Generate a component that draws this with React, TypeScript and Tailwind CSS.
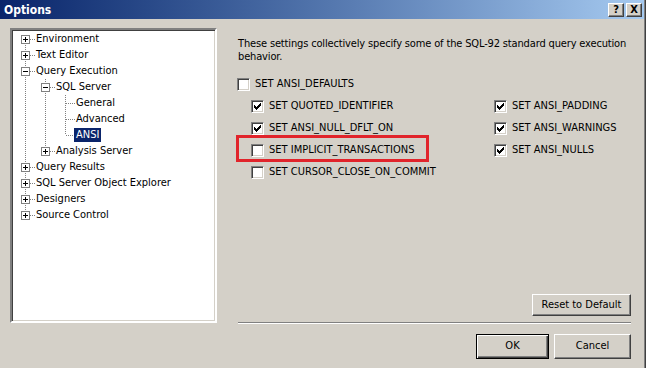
import React from "react";

type TreeRow = {
  level: number;
  label: string;
  kind: "plus" | "minus" | "leaf";
  guides: boolean[];
  first?: boolean;
  last?: boolean;
  selected?: boolean;
};

const rows: TreeRow[] = [
  { level: 0, label: "Environment", kind: "plus", guides: [], first: true },
  { level: 0, label: "Text Editor", kind: "plus", guides: [] },
  { level: 0, label: "Query Execution", kind: "minus", guides: [] },
  { level: 1, label: "SQL Server", kind: "minus", guides: [true] },
  { level: 2, label: "General", kind: "leaf", guides: [true, true] },
  { level: 2, label: "Advanced", kind: "leaf", guides: [true, true] },
  { level: 2, label: "ANSI", kind: "leaf", guides: [true, true], last: true, selected: true },
  { level: 1, label: "Analysis Server", kind: "plus", guides: [true], last: true },
  { level: 0, label: "Query Results", kind: "plus", guides: [] },
  { level: 0, label: "SQL Server Object Explorer", kind: "plus", guides: [] },
  { level: 0, label: "Designers", kind: "plus", guides: [] },
  { level: 0, label: "Source Control", kind: "plus", guides: [], last: true },
];

const dots = { stroke: "#808080", strokeWidth: 1, strokeDasharray: "1 1" };

const Guide = ({ on }: { on: boolean }) => (
  <svg width="20" height="16" className="shrink-0" shapeRendering="crispEdges">
    {on && <line x1="10.5" y1="0" x2="10.5" y2="16" {...dots} />}
  </svg>
);

const Connector = ({ row }: { row: TreeRow }) => (
  <svg width="20" height="16" className="shrink-0" shapeRendering="crispEdges">
    <line x1="10.5" y1={row.first ? 8 : 0} x2="10.5" y2={row.last ? 8 : 16} {...dots} />
    <line x1={row.kind === "leaf" ? 11 : 15} y1="8.5" x2="20" y2="8.5" {...dots} />
    {row.kind !== "leaf" && (
      <>
        <rect x="6.5" y="4.5" width="8" height="8" fill="#fff" stroke="#808080" />
        <rect x="8" y="8" width="5" height="1" fill="#000" />
        {row.kind === "plus" && <rect x="10" y="6" width="1" height="5" fill="#000" />}
      </>
    )}
  </svg>
);

const Check = ({ checked }: { checked?: boolean }) => (
  <div className="w-[13px] h-[13px] shrink-0 bg-white border border-t-[#808080] border-l-[#808080] border-r-white border-b-white shadow-[inset_1px_1px_#404040,inset_-1px_-1px_#d4d0c8]">
    {checked && (
      <svg width="11" height="11" shapeRendering="crispEdges" className="block">
        {[2, 3, 4, 3, 2, 1, 0].map((top, i) => (
          <rect key={i} x={2 + i} y={2 + top} width="1" height="3" fill="#000" />
        ))}
      </svg>
    )}
  </div>
);

const Option = ({ label, checked }: { label: string; checked?: boolean }) => (
  <div className="flex items-center h-[22px] gap-[5px]">
    <Check checked={checked} />
    <span className="whitespace-nowrap">{label}</span>
  </div>
);

const raised =
  "border border-t-white border-l-white border-r-[#404040] border-b-[#404040] shadow-[inset_-1px_-1px_#808080] bg-[#d4d0c8]";

export default function App() {
  return (
    <div
      className="w-[646px] h-[368px] bg-[#d4d0c8] flex flex-col overflow-hidden text-[11px] text-black shadow-[inset_-1px_0_#404040,inset_-2px_0_#808080]"
      style={{ fontFamily: '"DejaVu Sans Condensed", "Liberation Sans", Arial, sans-serif' }}
    >
      {/* title bar */}
      <div className="h-[19px] mr-[2px] flex items-center justify-between pl-[4px] pr-[2px] bg-gradient-to-r from-[#0a246a] to-[#a6caf0]">
        <span className="text-white font-bold text-[12px]">Options</span>
        <div className="flex gap-[2px]">
          <div className={`w-[16px] h-[14px] flex items-center justify-center text-[11px] font-bold leading-none ${raised}`}>?</div>
          <div className={`w-[16px] h-[14px] flex items-center justify-center text-[11px] font-bold leading-none ${raised}`}>X</div>
        </div>
      </div>

      <div className="flex-1 flex">
        {/* tree */}
        <div className="pl-[10px] pt-[9px]">
          <div className="w-[207px] h-[295px] bg-white border-2 border-t-[#808080] border-l-[#808080] border-r-white border-b-white shadow-[inset_1px_1px_#404040,inset_-1px_-1px_#d4d0c8] pl-[3px] pt-[1px]">
            {rows.map((r) => (
              <div key={r.label} className="flex items-center h-[16px]">
                {r.guides.map((g, i) => (
                  <Guide key={i} on={g} />
                ))}
                <Connector row={r} />
                <span
                  className={`-ml-[1px] px-[2px] h-[14px] leading-[14px] whitespace-nowrap ${
                    r.selected ? "bg-[#0a246a] text-white" : ""
                  }`}
                >
                  {r.label}
                </span>
              </div>
            ))}
          </div>
        </div>

        {/* settings */}
        <div className="ml-[21px] w-[393px] flex flex-col pt-[18px] pb-[9px]">
          <p className="leading-[13px] tracking-[-0.15px]">
            <span className="whitespace-nowrap">
              These settings collectively specify some of the SQL-92 standard query execution
            </span>
            <br />
            behavior.
          </p>
          <div className="mt-[10px] -ml-[1px]">
            <Option label="SET ANSI_DEFAULTS" />
          </div>
          <div className="grid grid-cols-[243px_1fr] pl-[13px]">
            <Option label="SET QUOTED_IDENTIFIER" checked />
            <Option label="SET ANSI_PADDING" checked />
            <Option label="SET ANSI_NULL_DFLT_ON" checked />
            <Option label="SET ANSI_WARNINGS" checked />
            <div className="relative">
              <Option label="SET IMPLICIT_TRANSACTIONS" />
              <div className="absolute left-[-15px] top-[-4px] w-[193px] h-[27px] border-[3px] border-[#e1242b] pointer-events-none" />
            </div>
            <Option label="SET ANSI_NULLS" checked />
            <Option label="SET CURSOR_CLOSE_ON_COMMIT" />
          </div>

          <div className="mt-auto flex justify-end">
            <button className={`w-[99px] h-[22px] ${raised}`}>Reset to Default</button>
          </div>
          <div className="mt-[6px] h-[2px] border-t border-t-[#808080] border-b border-b-white" />
          <div className="mt-[10px] flex justify-end gap-[5px]">
            <button className="w-[73px] h-[25px] bg-[#d4d0c8] border border-black shadow-[inset_1px_1px_#fff,inset_-1px_-1px_#404040,inset_-2px_-2px_#808080]">
              OK
            </button>
            <button className={`w-[77px] h-[25px] ${raised}`}>Cancel</button>
          </div>
        </div>
      </div>
    </div>
  );
}
